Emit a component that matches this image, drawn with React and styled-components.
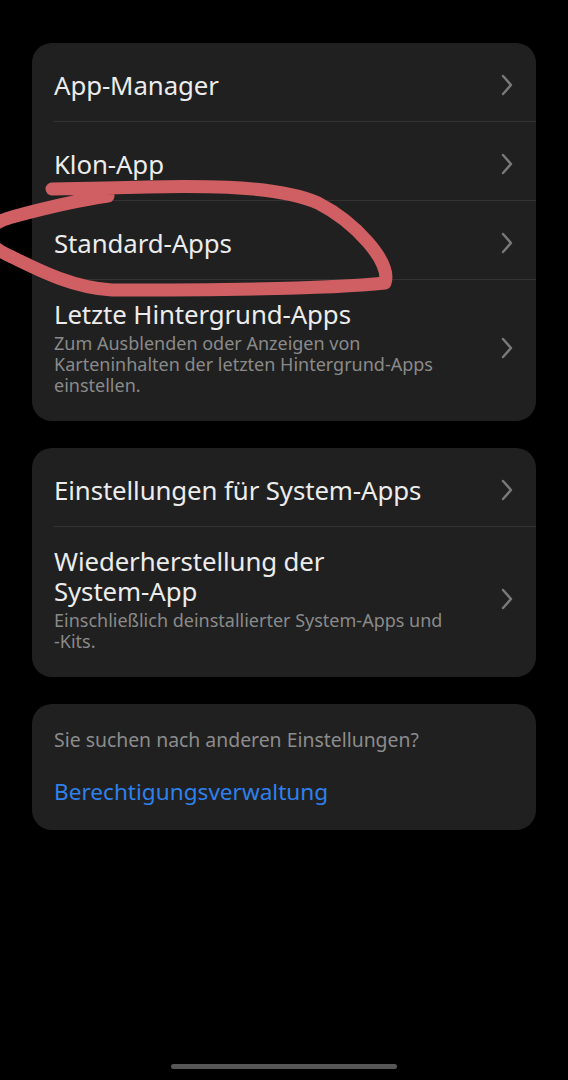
import React from "react";
import styled, { createGlobalStyle } from "styled-components";

const Global = createGlobalStyle`
  html, body { margin: 0; padding: 0; background: #000; }
  body { font-family: "Noto Sans", "Open Sans", sans-serif; -webkit-font-smoothing: antialiased; }
`;

const Page = styled.div`
  position: relative;
  min-height: 1080px;
  box-sizing: border-box;
  padding: 43px 32px 0;
  display: flex;
  flex-direction: column;
  gap: 27px;
  overflow: hidden;
`;

const Card = styled.section`
  background: #202020;
  border-radius: 20px;
  display: flex;
  flex-direction: column;
  padding: ${(p) => p.$pad || "0"};
`;

const Row = styled.div`
  display: flex;
  align-items: center;
  gap: 16px;
  margin-left: 22px;
  padding: ${(p) => (p.$multi ? "19px 23px 25px 0" : "27px 23px 21px 0")};
  border-top: ${(p) => (p.$first ? "none" : "1px solid #333333")};
`;

const Texts = styled.div`
  flex: 1;
  display: flex;
  flex-direction: column;
  gap: 4px;
  min-width: 0;
  padding-right: 34px;
`;

const Title = styled.div`
  color: #ececec;
  font-size: 25.8px;
  line-height: 30px;
  letter-spacing: -0.1px;
`;

const Sub = styled.div`
  color: #8a8a8a;
  font-size: 18px;
  line-height: 21px;
`;

const NoWrap = styled.span`
  white-space: nowrap;
`;

const Hint = styled.div`
  color: #8c8c8c;
  font-size: 19.4px;
  line-height: 24px;
`;

const Link = styled.div`
  color: #2f80ed;
  font-size: 22.6px;
  line-height: 30px;
  margin-top: 25px;
`;

const Spacer = styled.div`
  flex: 1;
`;

const HomeBar = styled.div`
  align-self: center;
  width: 226px;
  height: 5px;
  border-radius: 3px;
  background: #565656;
  margin-bottom: 11px;
`;

const Annotation = styled.svg`
  position: absolute;
  left: 0;
  top: 0;
  width: 568px;
  height: 1080px;
  pointer-events: none;
`;

const Chevron = () => (
  <svg width="12" height="22" viewBox="0 0 12 22" fill="none">
    <path d="M2 2 L10 11 L2 20" stroke="#7a7a7a" strokeWidth="2.4" strokeLinecap="round" strokeLinejoin="round" />
  </svg>
);

const Item = ({ title, sub, first }) => (
  <Row $first={first} $multi={!!sub}>
    <Texts>
      <Title>{title}</Title>
      {sub && <Sub>{sub}</Sub>}
    </Texts>
    <Chevron />
  </Row>
);

export default function App() {
  return (
    <>
      <Global />
      <Page>
        <Card>
          <Item first title="App-Manager" />
          <Item title="Klon-App" />
          <Item title="Standard-Apps" />
          <Item
            title="Letzte Hintergrund-Apps"
            sub="Zum Ausblenden oder Anzeigen von Karteninhalten der letzten Hintergrund-Apps einstellen."
          />
        </Card>
        <Card>
          <Item first title="Einstellungen für System-Apps" />
          <Item
            title={<>Wiederherstellung der <NoWrap>System-App</NoWrap></>}
            sub={<>Einschließlich deinstallierter System-Apps und <NoWrap>-Kits.</NoWrap></>}
          />
        </Card>
        <Card $pad="24px 22px 23px">
          <Hint>Sie suchen nach anderen Einstellungen?</Hint>
          <Link>Berechtigungsverwaltung</Link>
        </Card>
        <Spacer />
        <HomeBar />
        <Annotation viewBox="0 0 568 1080">
          <path
            d="M 52 189 L 105 188 C 190 185, 275 184, 318 203 C 355 222, 392 262, 385 283 C 330 289, 200 290, 112 290 C 75 288, 42 272, 12 257 C -22 242, -20 226, 12 217 C 45 208, 80 200, 108 196"
            fill="none"
            stroke="#cf5f63"
            strokeWidth="13"
            strokeLinecap="round"
            strokeLinejoin="round"
          />
        </Annotation>
      </Page>
    </>
  );
}
